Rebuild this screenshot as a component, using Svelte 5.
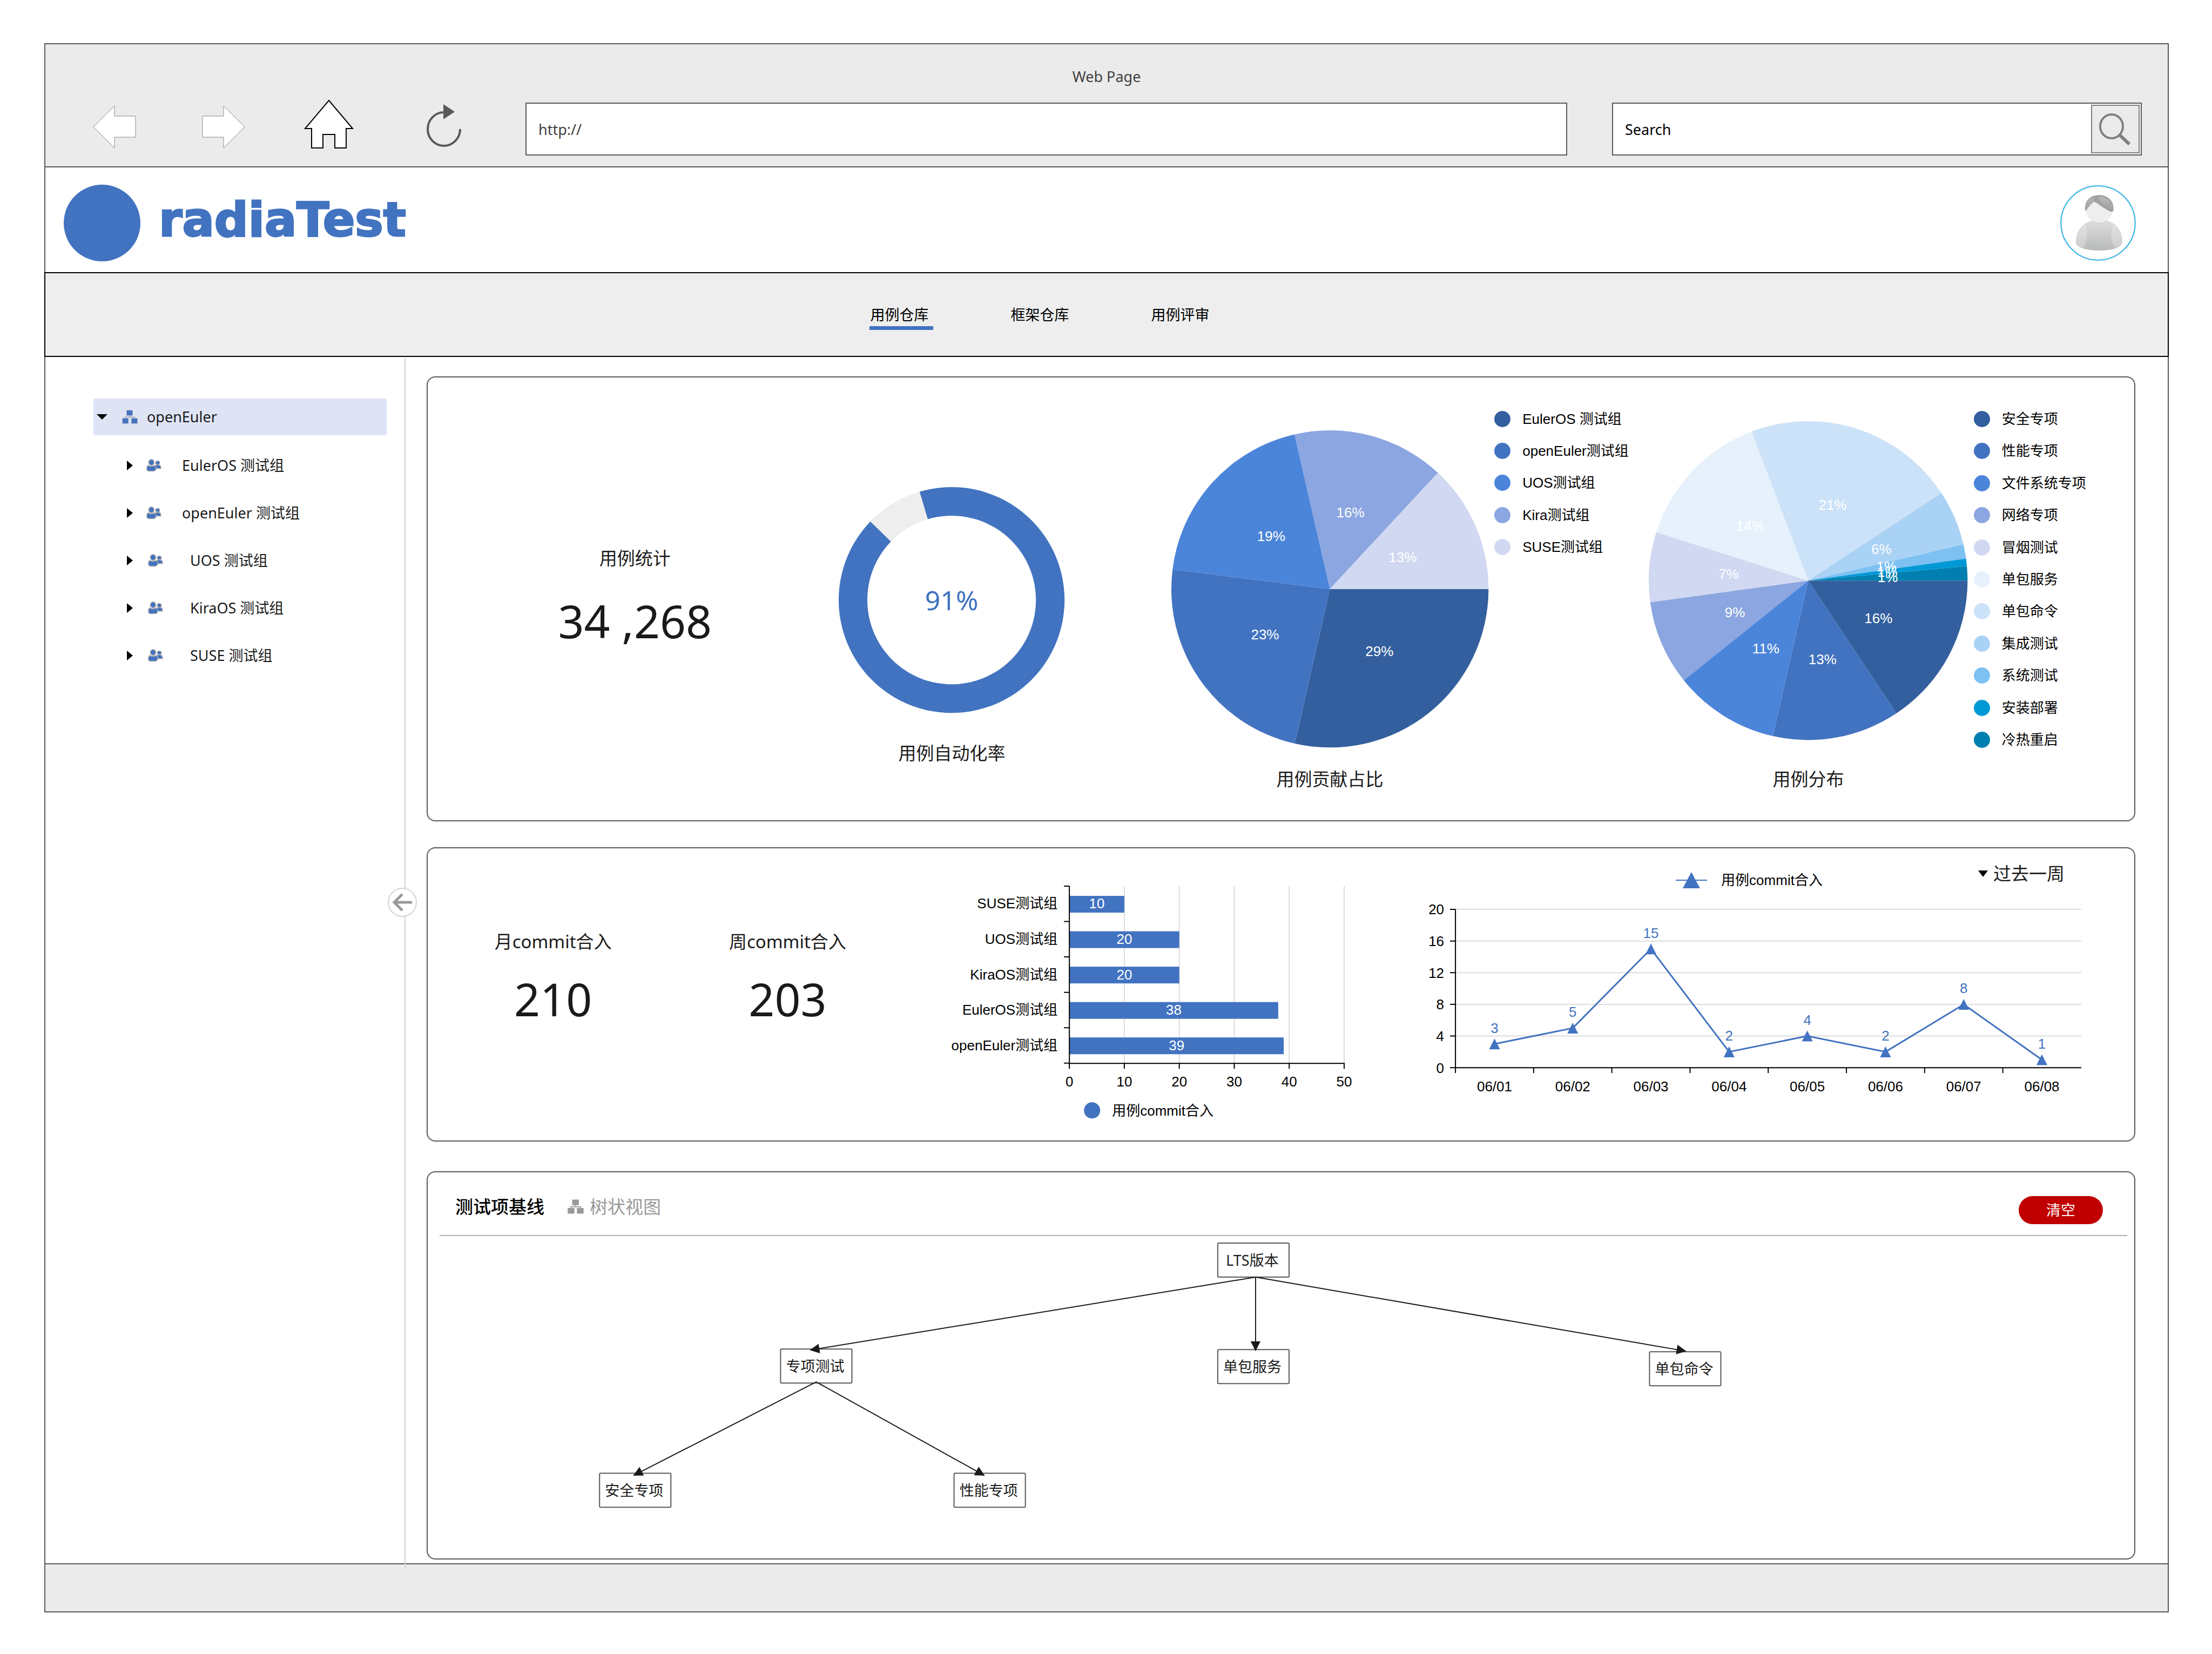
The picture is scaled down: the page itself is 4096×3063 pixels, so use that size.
<script>
  const blue = '#4273c0';

  const tabs = ['用例仓库', '框架仓库', '用例评审'];

  const groups = [
    { name: 'EulerOS 测试组', deep: false },
    { name: 'openEuler 测试组', deep: false },
    { name: 'UOS 测试组', deep: true },
    { name: 'KiraOS 测试组', deep: true },
    { name: 'SUSE 测试组', deep: true }
  ];

  // Angles are in degrees, clockwise from three o'clock.
  function slices(list, r) {
    let from = 0;
    return list.map((item) => {
      const a = (from * Math.PI) / 180;
      const b = (item.to * Math.PI) / 180;
      const mid = (a + b) / 2;
      const large = item.to - from > 180 ? 1 : 0;
      const d = `M${r} ${r}L${r + r * Math.cos(a)} ${r + r * Math.sin(a)}A${r} ${r} 0 ${large} 1 ${r + r * Math.cos(b)} ${r + r * Math.sin(b)}Z`;
      from = item.to;
      return { ...item, d, x: r + (r / 2) * Math.cos(mid), y: r + (r / 2) * Math.sin(mid) };
    });
  }

  const share = slices(
    [
      { name: 'EulerOS 测试组', label: '29%', to: 102.8, color: '#335f9e' },
      { name: 'openEuler测试组', label: '23%', to: 187.1, color: '#4273c0' },
      { name: 'UOS测试组', label: '19%', to: 257.1, color: '#4b85da' },
      { name: 'Kira测试组', label: '16%', to: 312.9, color: '#8ba6e0' },
      { name: 'SUSE测试组', label: '13%', to: 360, color: '#d1d8f1' }
    ],
    293
  );

  const spread = slices(
    [
      { name: '安全专项', label: '16%', to: 56.4, color: '#335f9e' },
      { name: '性能专项', label: '13%', to: 102.8, color: '#4273c0' },
      { name: '文件系统专项', label: '11%', to: 141.3, color: '#4b85da' },
      { name: '网络专项', label: '9%', to: 172.2, color: '#8ba6e0' },
      { name: '冒烟测试', label: '7%', to: 197.7, color: '#d1d8f1' },
      { name: '单包服务', label: '14%', to: 249.2, color: '#e6f1fc' },
      { name: '单包命令', label: '21%', to: 326.7, color: '#cbe2f8' },
      { name: '集成测试', label: '6%', to: 346.9, color: '#aad2f5' },
      { name: '系统测试', label: '1%', to: 352.1, color: '#7dc1f2' },
      { name: '安装部署', label: '1%', to: 354.8, color: '#0099d6' },
      { name: '冷热重启', label: '1%', to: 360, color: '#007fb0' }
    ],
    295
  );

  function ring(from, to, outer, inner) {
    const p = (deg, r) => {
      const a = (deg * Math.PI) / 180;
      return `${209 + r * Math.sin(a)} ${209 - r * Math.cos(a)}`;
    };
    const large = to - from > 180 ? 1 : 0;
    return `M${p(from, outer)}A${outer} ${outer} 0 ${large} 1 ${p(to, outer)}L${p(to, inner)}A${inner} ${inner} 0 ${large} 0 ${p(from, inner)}Z`;
  }

  const bars = [
    { name: 'SUSE测试组', value: 10 },
    { name: 'UOS测试组', value: 20 },
    { name: 'KiraOS测试组', value: 20 },
    { name: 'EulerOS测试组', value: 38 },
    { name: 'openEuler测试组', value: 39 }
  ];
  const barX = (v) => 304 + v * 10.17;
  const barY = (i) => 70 + i * 65.5;

  const days = [3, 5, 15, 2, 4, 2, 8, 1].map((value, i) => ({
    value,
    day: `06/0${i + 1}`,
    x: 133 + (i + 0.5) * 144.7,
    y: 306 - value * 14.65
  }));
  const line = days.map((d) => `${d.x},${d.y}`).join(' ');

  const nodes = [
    { name: 'LTS版本', x: 1462, y: 13 },
    { name: '专项测试', x: 653, y: 209 },
    { name: '单包服务', x: 1462, y: 210 },
    { name: '单包命令', x: 2261, y: 214 },
    { name: '安全专项', x: 318, y: 439 },
    { name: '性能专项', x: 974, y: 439 }
  ];
  const links = [
    [1532, 76, 708, 211],
    [1532, 76, 1532, 212],
    [1532, 76, 2328, 213],
    [719, 270, 381, 443],
    [719, 270, 1030, 443]
  ];
</script>

{#snippet orgIcon()}
  <path d="M18 13V17M7 21V17H30V21" fill="none" stroke-width="2" />
  <rect x="11" y="1" width="14" height="12" />
  <rect x="1" y="20" width="14" height="12" />
  <rect x="22" y="20" width="14" height="12" />
{/snippet}

{#snippet legend(items)}
  <ul class="legend" class:long={items.length > 5}>
    {#each items as item}
      <li><span class="dot" style:background={item.color}></span>{item.name}</li>
    {/each}
  </ul>
{/snippet}

<div class="page">
  <div class="frame">
    <header class="browser">
      <div class="title">Web Page</div>
      <div class="toolbar">
        <button class="back" aria-label="Back">
          <svg width="80" height="80" viewBox="0 0 80 80"><path d="M1 40L40 1V20H79V59H40V79Z" fill="#fff" stroke="#8c8c8c" /></svg>
        </button>
        <button class="forward" aria-label="Forward">
          <svg width="80" height="80" viewBox="0 0 80 80"><path d="M79 40L40 1V20H1V59H40V79Z" fill="#fff" stroke="#8c8c8c" /></svg>
        </button>
        <button class="home" aria-label="Home">
          <svg width="92" height="96" viewBox="0 0 92 96"><path d="M46 4L90 56H78V92H57V67H35V92H14V56H2Z" fill="#fff" stroke="#000" stroke-width="2" /></svg>
        </button>
        <button class="reload" aria-label="Reload">
          <svg width="64" height="84" viewBox="0 0 64 84"><path d="M62 46A30 31 0 1 1 32 15" fill="none" stroke="#595959" stroke-width="4" /><path d="M31 0L52 14L31 28Z" fill="#595959" /></svg>
        </button>
        <input class="url" type="text" aria-label="Address" value="http://" />
        <div class="search">
          <input type="text" aria-label="Search" value="Search" />
          <button aria-label="Run search">
            <svg width="86" height="86" viewBox="0 0 86 86" fill="none" stroke="#7f7f7f"><ellipse cx="36" cy="38" rx="21" ry="22" stroke-width="4" /><path d="M51 54L69 71" stroke-width="6" /></svg>
          </button>
        </div>
      </div>
    </header>

    <div class="brand">
      <span class="mark"></span>
      <h1>radiaTest</h1>
      <svg class="avatar" width="142" height="142" viewBox="0 0 184 184" role="img" aria-label="User">
        <defs>
          <linearGradient id="body" x1="0" y1="0" x2="0" y2="1"><stop offset="0" stop-color="#dcdddc" /><stop offset="1" stop-color="#b8baba" /></linearGradient>
          <linearGradient id="hair" x1="0" y1="0" x2="0" y2="1"><stop offset="0" stop-color="#b9b9b9" /><stop offset="1" stop-color="#9f9f9f" /></linearGradient>
        </defs>
        <circle cx="92" cy="92" r="89" fill="#fff" stroke="#ececec" stroke-width="5" />
        <circle cx="92" cy="92" r="89" fill="none" stroke="#00aeef" stroke-width="2" />
        <path d="M78 86C54 92 39 112 39 138C39 150 62 158 95 158C128 158 150 150 150 138C150 112 136 92 112 86Z" fill="url(#body)" />
        <path d="M61 96C50 103 40 118 40 138C41 145 48 150 58 152C68 130 69 108 61 96ZM129 96C140 103 149 118 149 138C148 145 142 150 132 152C121 130 121 108 129 96Z" fill="#fff" opacity="0.25" />
        <circle cx="95" cy="58" r="33" fill="#eee" />
        <path d="M61 60C59 38 74 25 95 25C116 25 131 40 129 60C129 65 126 66 121 64C107 58 96 48 84 41C78 42 70 52 62 64Z" fill="#a1a1a1" />
        <path d="M62 58C62 42 68 34 79 33C83 35 83 38 82 41C75 43 69 52 62 62ZM94 33C91 29 98 28 104 30C120 34 128 45 127 59C122 60 115 54 109 50C101 44 96 38 94 33Z" fill="url(#hair)" />
      </svg>
    </div>

    <nav>
      {#each tabs as tab, i}
        <a href="#tab{i}" class:active={i === 0}>{tab}</a>
      {/each}
    </nav>

    <div class="workspace">
      <aside>
        <button class="node root">
          <svg class="caret-down" width="20" height="10" viewBox="0 0 20 10"><path d="M0 0H20L10 10Z" /></svg>
          <svg class="org" width="29" height="26" viewBox="0 0 37 33" fill={blue} stroke="#a0a8b8">{@render orgIcon()}</svg>
          openEuler
        </button>
        <ul>
          {#each groups as group}
            <li>
              <button class="node child" class:deep={group.deep}>
                <svg width="11" height="18" viewBox="0 0 11 18"><path d="M0 0L11 9L0 18Z" /></svg>
                <svg class="people" width="28" height="24" viewBox="0 0 36 31" fill={blue} stroke="#adadad" stroke-width="2">
                  <ellipse cx="27" cy="9" rx="5" ry="4.500" />
                  <path d="M22 15C24 13 32 13 34 17L35 23H22Z" />
                  <ellipse cx="12" cy="8" rx="6.500" ry="7" />
                  <path d="M4 15C8 18 16 18 19 15C22 16 23 19 23 24C22 28 19 29 17 29H6C3 29 1 27 1 24C1 20 2 16 4 15Z" />
                </svg>
                <span>{group.name}</span>
              </button>
            </li>
          {/each}
        </ul>
        <button class="collapse" aria-label="Collapse">
          <svg width="50" height="50" viewBox="0 0 50 50" fill="none" stroke="#999" stroke-width="5"><path d="M43 25H10M25 10L10 25L25 40" /></svg>
        </button>
      </aside>

      <main>
        <section class="card overview">
          <div class="stat">
            <h2>用例统计</h2>
            <strong>34 ,268</strong>
          </div>
          <figure class="rate">
            <svg viewBox="0 0 418 418">
              <path d={ring(-16.5, 314, 209, 156)} fill={blue} />
              <path d={ring(-46, -16.5, 209, 156)} fill="#eee" />
              <text x="209" y="210" dy=".36em" class="percent">91%</text>
            </svg>
            <figcaption>用例自动化率</figcaption>
          </figure>
          <figure class="share">
            <svg viewBox="0 0 586 586">
              {#each share as s}<path d={s.d} fill={s.color} />{/each}
              {#each share as s}<text x={s.x} y={s.y} dy=".36em" class="value">{s.label}</text>{/each}
            </svg>
            <figcaption>用例贡献占比</figcaption>
          </figure>
          {@render legend(share)}
          <figure class="spread">
            <svg viewBox="0 0 590 590">
              {#each spread as s}<path d={s.d} fill={s.color} />{/each}
              {#each spread as s}<text x={s.x} y={s.y} dy=".36em" class="value">{s.label}</text>{/each}
            </svg>
            <figcaption>用例分布</figcaption>
          </figure>
          {@render legend(spread)}
        </section>

        <section class="card commits">
          <div class="stat">
            <h2>月commit合入</h2>
            <strong>210</strong>
          </div>
          <div class="stat">
            <h2>周commit合入</h2>
            <strong>203</strong>
          </div>
          <svg viewBox="0 0 886 540" class="chart">
            {#each [10, 20, 30, 40, 50] as v}
              <path d="M{barX(v)} 70V397" class="grid" />
            {/each}
            {#each bars as bar, i}
              <rect x="304" y={barY(i) + 18} width={bar.value * 10.17} height="31" fill={blue} />
              <text x={304 + bar.value * 5.085} y={barY(i) + 32} dy=".36em" class="value">{bar.value}</text>
              <text x="282" y={barY(i) + 32} dy=".36em" class="end">{bar.name}</text>
            {/each}
            {#each [0, 1, 2, 3, 4, 5] as i}
              <path d="M294 {barY(i)}H304M{barX(i * 10)} 397V408" class="axis" />
              <text x={barX(i * 10)} y="431" dy=".36em" class="mid">{i * 10}</text>
            {/each}
            <path d="M304 70V398H813" class="axis" />
            <circle cx="346" cy="485" r="15" fill={blue} />
            <text x="383" y="485" dy=".36em">用例commit合入</text>
          </svg>
          <div class="trend">
            <div class="trend-head">
              <span class="series">
                <svg width="58" height="30" viewBox="0 0 58 30" fill={blue}><path d="M0 14H58V16H0ZM29 0L45 30H13Z" /></svg>
                用例commit合入
              </span>
              <label class="range">
                <svg width="18" height="12" viewBox="0 0 18 12"><path d="M0 0H18L9 12Z" /></svg>
                <select aria-label="时间范围"><option>过去一周</option></select>
              </label>
            </div>
            <svg viewBox="0 0 1389 440" class="chart">
              {#each [0, 4, 8, 12, 16, 20] as v}
                <path d="M133 {306 - v * 14.65}H1291" class="grid" />
                <path d="M123 {306 - v * 14.65}H133" class="axis" />
                <text x="112" y={306 - v * 14.65} dy=".36em" class="end">{v}</text>
              {/each}
              <path d="M133 13V306H1291" class="axis" />
              <polyline points={line} fill="none" stroke={blue} stroke-width="3" />
              {#each days as d, i}
                <path d="M{133 + i * 144.7} 306V316" class="axis" />
                <path d="M{d.x} {d.y - 10}L{d.x + 10} {d.y + 10}H{d.x - 10}Z" fill={blue} />
                <text x={d.x} y={d.y - 30} dy=".36em" class="point">{d.value}</text>
                <text x={d.x} y="340" dy=".36em" class="mid">{d.day}</text>
              {/each}
            </svg>
          </div>
        </section>

        <section class="card baseline">
          <div class="baseline-head">
            <h3>测试项基线</h3>
            <button class="view">
              <svg width="30" height="27" viewBox="0 0 37 33" fill="#999" stroke="#999">{@render orgIcon()}</svg>
              树状视图
            </button>
            <button class="clear">清空</button>
          </div>
          <svg viewBox="0 0 3158 597" class="chart tree">
            <defs>
              <marker id="arrow" viewBox="0 0 18 18" refX="17" refY="9" markerWidth="18" markerHeight="18" markerUnits="userSpaceOnUse" orient="auto"><path d="M0 0L18 9L0 18Z" fill="#1a1a1a" /></marker>
            </defs>
            {#each nodes as n}
              <rect x={n.x} y={n.y} width="132" height="63" rx="2" fill="#fff" stroke="#595959" stroke-width="2" />
              <text x={n.x + 64} y={n.y + 32} dy=".36em" class="mid">{n.name}</text>
            {/each}
            {#each links as [x1, y1, x2, y2]}
              <line {x1} {y1} {x2} {y2} stroke="#1a1a1a" stroke-width="2" marker-end="url(#arrow)" />
            {/each}
          </svg>
        </section>
      </main>
    </div>

    <footer></footer>
  </div>
</div>

<style>
  :global(body) {
    margin: 0;
    background: #fff;
  }

  .page,
  button,
  input,
  select {
    font-family: 'Noto Sans', 'Noto Sans CJK SC', sans-serif;
    font-size: 27px;
    line-height: 40px;
    color: #1a1a1a;
  }

  .page {
    box-sizing: border-box;
    min-height: 100vh;
    padding: 80px 80px 78px 82px;
    display: flex;
  }

  .frame {
    flex: 1;
    min-width: 0;
    display: flex;
    flex-direction: column;
    border: 2px solid #595959;
  }

  button {
    padding: 0;
    border: 0;
    background: none;
    cursor: pointer;
  }

  svg {
    display: block;
    flex: none;
    overflow: visible;
  }

  h1,
  h2,
  h3,
  ul,
  figure {
    margin: 0;
    padding: 0;
    list-style: none;
    font-weight: 400;
  }

  .browser {
    background: #ebebeb;
    border-bottom: 2px solid #595959;
    padding: 40px 48px 20px 88px;
  }

  .title {
    text-align: center;
    color: #404040;
    padding-right: 40px;
    padding-bottom: 28px;
  }

  .toolbar {
    display: flex;
    align-items: center;
    height: 98px;
  }

  .back {
    margin: 0 122px 8px 0;
  }

  .forward {
    margin: 0 109px 8px 0;
  }

  .home {
    margin: 0 135px 18px 0;
  }

  .reload {
    margin: 0 119px 8px 0;
  }

  .url,
  .search {
    box-sizing: border-box;
    height: 98px;
    border: 2px solid #595959;
    background: #fff;
  }

  .url {
    flex: 1 1 1928px;
    min-width: 0;
    margin-right: 83px;
    padding: 0 22px;
    color: #404040;
  }

  .search {
    flex: 1 1 980px;
    min-width: 0;
    display: flex;
    align-items: flex-start;
    padding: 2px;
  }

  .search input {
    flex: 1;
    min-width: 0;
    height: 90px;
    box-sizing: border-box;
    border: 0;
    padding: 0 20px;
    color: #000;
  }

  .search button {
    border: 2px solid #7f7f7f;
    background: #ebebeb;
  }

  .brand {
    display: flex;
    align-items: center;
    height: 194px;
    padding: 0 58px 0 34px;
    box-sizing: border-box;
  }

  .brand .mark {
    width: 142px;
    height: 142px;
    margin: 12px 34px 0 0;
    border-radius: 50%;
    background: #4273c0;
  }

  h1 {
    font-family: 'DejaVu Sans', sans-serif;
    font-weight: 700;
    font-size: 88px;
    line-height: 120px;
    color: #4273c0;
    -webkit-text-stroke: 3px #4273c0;
  }

  .avatar {
    margin: 12px 0 0 auto;
  }

  nav {
    display: flex;
    justify-content: center;
    gap: 142px;
    margin: 0 -2px;
    padding: 56px 241px 48px 0;
    border: 2px solid #000;
    background: #eee;
  }

  nav a {
    color: #000;
    text-decoration: none;
    line-height: 42px;
    padding: 0 8px 0 2px;
    border-bottom: 7px solid transparent;
  }

  nav a.active {
    border-color: #4273c0;
  }

  .workspace {
    flex: 1;
    display: grid;
    grid-template-columns: 667px minmax(0, 1fr);
  }

  aside {
    position: relative;
    padding: 77px 35px 0 89px;
  }

  aside::after {
    content: '';
    position: absolute;
    top: 2px;
    right: 0;
    bottom: -11px;
    border-right: 2px solid #d3d3d3;
  }

  .node {
    display: flex;
    align-items: center;
    width: 100%;
    text-align: left;
  }

  .root {
    height: 68px;
    padding-left: 6px;
    margin-bottom: 12px;
    border-radius: 2px;
    background: #dfe4f5;
  }

  .org {
    margin: 0 17px 0 27px;
  }

  .child {
    height: 88px;
    padding-left: 62px;
  }

  .child .people {
    margin: 0 38px 0 25px;
  }

  .child.deep .people {
    margin: 0 50px 0 28px;
  }

  .collapse {
    position: absolute;
    z-index: 1;
    top: 44%;
    right: -21px;
    border: 2px solid #d3d3d3;
    border-radius: 50%;
    background: #fff;
  }

  main {
    padding: 36px 60px 7px 39px;
  }

  .card {
    border: 2px solid #595959;
    border-radius: 16px;
    background: #fff;
  }

  .overview {
    display: grid;
    grid-template-columns: 751fr 422fr 195fr 587fr 297fr 590fr 308fr;
    align-items: start;
    padding: 0 0 54px 8px;
    margin-bottom: 48px;
  }

  .stat {
    text-align: center;
  }

  .stat h2,
  figcaption {
    font-size: 33px;
    line-height: 44px;
    text-align: center;
    color: #1a1a1a;
  }

  .stat strong {
    display: block;
    font-weight: 400;
    font-size: 84px;
    line-height: 120px;
  }

  .overview .stat {
    padding-top: 313px;
  }

  .overview strong {
    padding-top: 34px;
  }

  .commits strong {
    padding-top: 24px;
  }

  .rate {
    padding: 203px 2px 0;
  }

  .rate figcaption {
    padding-top: 53px;
  }

  .share {
    grid-column: 4;
    padding-top: 98px;
  }

  .share figcaption {
    padding-top: 37px;
  }

  .spread {
    padding-top: 81px;
  }

  .spread figcaption {
    padding-top: 51px;
  }

  figure svg,
  .chart {
    width: 100%;
    height: auto;
  }

  text,
  .legend,
  .series {
    font-family: 'Liberation Sans', 'Noto Sans CJK SC', sans-serif;
    font-size: 26px;
    fill: #000;
    color: #000;
  }

  .mid,
  .value,
  .point,
  .percent {
    text-anchor: middle;
  }

  .end {
    text-anchor: end;
  }

  .value {
    fill: #fff;
  }

  .point {
    fill: #4273c0;
  }

  .percent {
    font-family: 'Noto Sans', sans-serif;
    font-size: 50px;
    fill: #4273c0;
  }

  .legend {
    display: grid;
    grid-auto-rows: 1fr;
    min-height: 297px;
    padding: 47px 0 0 11px;
  }

  .legend.long {
    min-height: 654px;
  }

  .legend li {
    display: flex;
    align-items: center;
    gap: 22px;
    white-space: nowrap;
  }

  .dot {
    width: 30px;
    height: 30px;
    border-radius: 50%;
  }

  .grid {
    stroke: #dcdcdc;
    stroke-width: 2;
    fill: none;
  }

  .axis {
    stroke: #000;
    stroke-width: 2;
    fill: none;
  }

  .commits {
    display: grid;
    grid-template-columns: 434fr 434fr 886fr 1389fr;
    padding-left: 15px;
    margin-bottom: 55px;
  }

  .commits .stat {
    padding-top: 151px;
  }

  .trend-head {
    display: flex;
    align-items: flex-start;
    justify-content: space-between;
    height: 100px;
    padding: 25px 129px 0 541px;
    box-sizing: border-box;
  }

  .series {
    display: flex;
    align-items: center;
    gap: 26px;
    padding-top: 14px;
  }

  .range {
    display: flex;
    align-items: center;
    gap: 10px;
  }

  select {
    appearance: none;
    border: 0;
    padding: 0;
    background: none;
    font-size: 33px;
    line-height: 44px;
  }

  .baseline-head {
    display: flex;
    align-items: flex-end;
    margin: 0 13px 0 22px;
    padding: 32px 45px 20px 29px;
    border-bottom: 2px solid #b0b0b0;
  }

  h3,
  .view {
    font-size: 33px;
    line-height: 64px;
  }

  h3 {
    font-weight: 500;
    color: #000;
    margin-right: 43px;
  }

  .view {
    display: flex;
    align-items: center;
    gap: 11px;
    color: #999;
  }

  .clear {
    width: 156px;
    height: 52px;
    margin-left: auto;
    border-radius: 26px;
    background: #c00000;
    color: #fff;
  }

  .tree text {
    font-family: 'Noto Sans', 'Noto Sans CJK SC', sans-serif;
    font-size: 27px;
    fill: #1a1a1a;
  }

  footer {
    height: 87px;
    border-top: 2px solid #595959;
    background: #ebebeb;
  }
</style>
